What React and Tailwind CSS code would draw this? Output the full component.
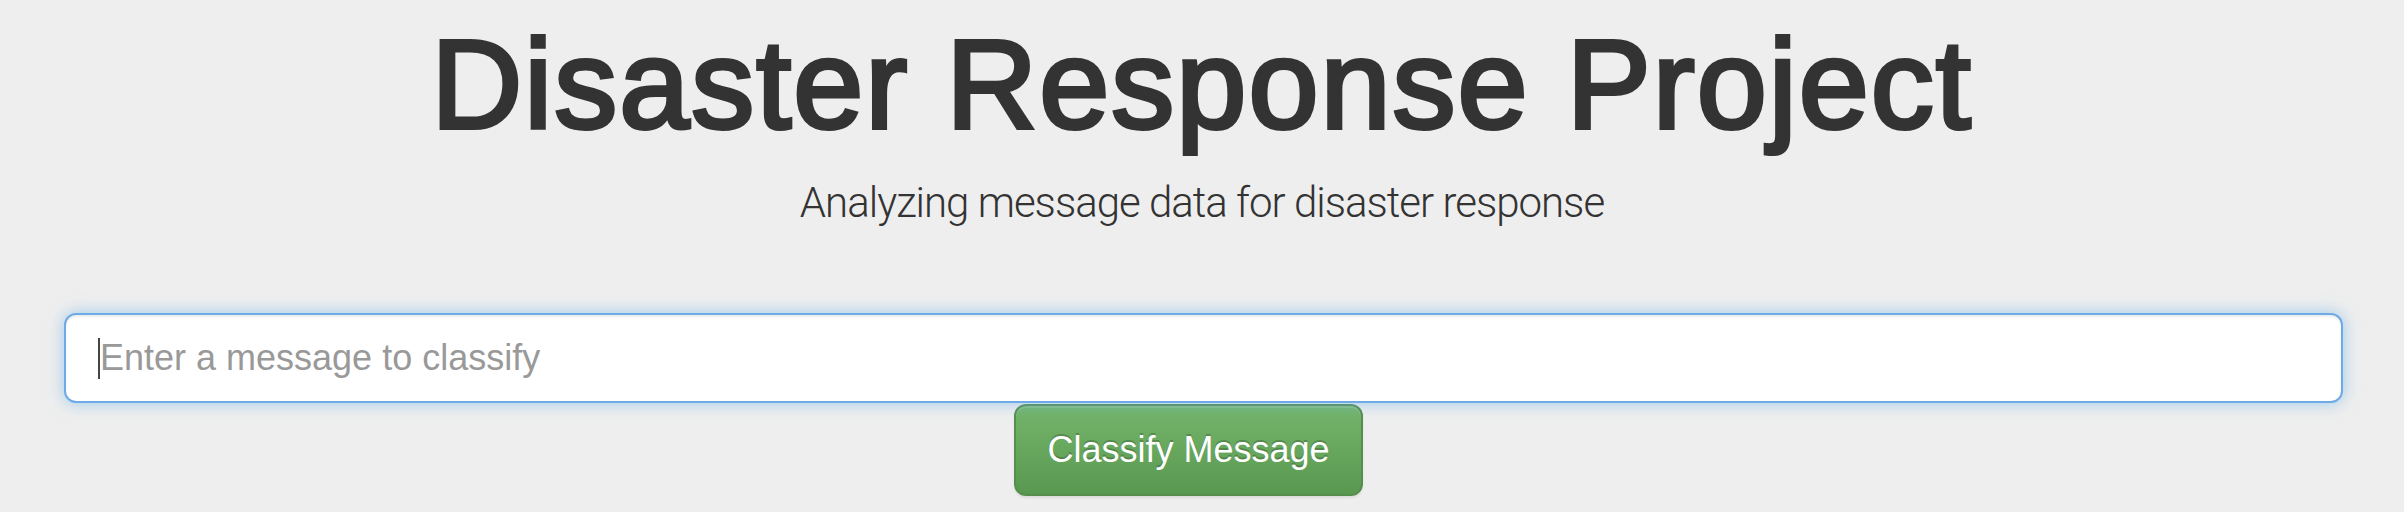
export default function App() {
  return (
    <div className="min-h-[512px] w-full bg-[#eeeeee] font-['Liberation_Sans',Arial,sans-serif] text-[#333333]">
      {/* Jumbotron heading */}
      <header className="flex flex-col items-center pt-[15px]">
        <h1 className="text-[126px] leading-[139px] font-medium tracking-[2px] [-webkit-text-stroke:4px_#333333]">
          Disaster Response Project
        </h1>
        <p className="mt-[19px] font-['Roboto',sans-serif] text-[42px] leading-[60px] font-light tracking-[-1px]">
          Analyzing message data for disaster response
        </p>
      </header>

      {/* Message form */}
      <form className="mt-[80px] flex flex-col" onSubmit={(e) => e.preventDefault()}>
        <div className="relative ml-16 mr-[61px]">
          <input
            type="text"
            placeholder="Enter a message to classify"
            className="h-[90px] w-full rounded-[12px] border-2 border-[#6eaae6] bg-white pl-[34px] pr-8 text-[36px] text-[#555555] outline-none placeholder:text-[#999999] shadow-[inset_0_2px_2px_rgba(0,0,0,0.075),0_0_16px_rgba(102,175,233,0.6)]"
          />
          {/* text caret */}
          <span className="pointer-events-none absolute left-[34px] top-[25px] h-[41px] w-[2px] bg-[#444444]" />
        </div>
        <button
          type="submit"
          className="ml-[1014px] mt-px h-[92px] w-[349px] rounded-[12px] border-2 border-[#568f4d] bg-gradient-to-b from-[#74b56b] to-[#599850] text-[36px] text-white [text-shadow:0_-2px_0_rgba(0,0,0,0.2)] shadow-[inset_0_2px_0_rgba(255,255,255,0.15),0_2px_2px_rgba(0,0,0,0.075)]"
        >
          Classify Message
        </button>
      </form>
    </div>
  );
}
